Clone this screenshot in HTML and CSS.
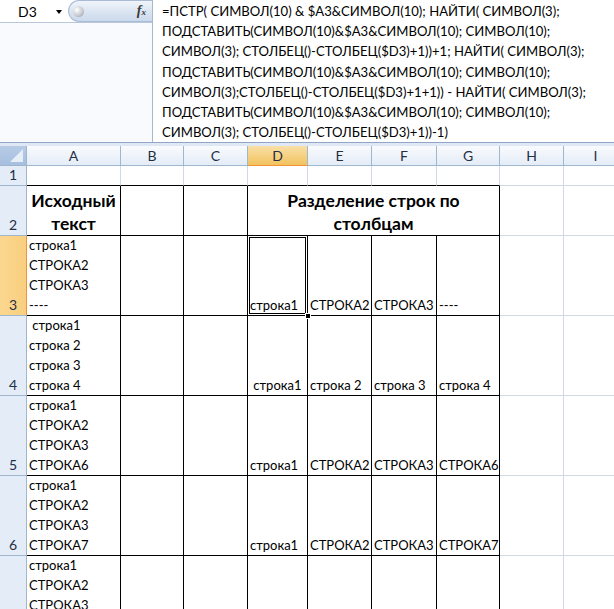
FILE: index.html
```html
<!DOCTYPE html>
<html lang="ru">
<head>
<meta charset="utf-8">
<title>Excel</title>
<link rel="stylesheet" href="styles.css">
</head>
<body>
<div class="app">
  <div class="fbar">
    <div class="fleft">
      <div class="ftop">
        <div class="namebox"><span class="nb-text">D3</span><span class="nb-arrow"></span></div>
        <div class="fxwidget"><span class="orb"></span><span class="fx">f<sub>x</sub></span></div>
      </div>
      <div class="fblank"></div>
    </div>
    <div class="ftext">=ПСТР( СИМВОЛ(10) &amp; $A3&amp;СИМВОЛ(10); НАЙТИ( СИМВОЛ(3);<br>ПОДСТАВИТЬ(СИМВОЛ(10)&amp;$A3&amp;СИМВОЛ(10); СИМВОЛ(10);<br>СИМВОЛ(3); СТОЛБЕЦ()-СТОЛБЕЦ($D3)+1))+1; НАЙТИ( СИМВОЛ(3);<br>ПОДСТАВИТЬ(СИМВОЛ(10)&amp;$A3&amp;СИМВОЛ(10); СИМВОЛ(10);<br>СИМВОЛ(3);СТОЛБЕЦ()-СТОЛБЕЦ($D3)+1+1)) - НАЙТИ( СИМВОЛ(3);<br>ПОДСТАВИТЬ(СИМВОЛ(10)&amp;$A3&amp;СИМВОЛ(10); СИМВОЛ(10);<br>СИМВОЛ(3); СТОЛБЕЦ()-СТОЛБЕЦ($D3)+1))-1)</div>
  </div>
  <div class="strip"></div>
  <div class="sheet">
    <div class="corner"><span class="corner-tri"></span></div>
    <div class="ch">A</div><div class="ch">B</div><div class="ch">C</div><div class="ch ch-sel">D</div><div class="ch">E</div><div class="ch">F</div><div class="ch">G</div><div class="ch">H</div><div class="ch">I</div>

    <div class="rh">1</div>
    <div class="c top"></div><div class="c top"></div><div class="c top"></div><div class="c top"></div><div class="c top"></div><div class="c top"></div><div class="c top"></div><div class="c"></div><div class="c"></div>

    <div class="rh">2</div>
    <div class="c t head"><span>Исходный<br>текст</span></div><div class="c t"></div><div class="c t"></div><div class="c t head span4"><span>Разделение строк по<br>столбцам</span></div><div class="c"></div><div class="c"></div>

    <div class="rh rh-sel">3</div>
    <div class="c t">строка1
СТРОКА2
СТРОКА3
----</div><div class="c t"></div><div class="c t"></div><div class="c t sel">строка1<span class="selbox"></span><span class="handle"></span></div><div class="c t">СТРОКА2</div><div class="c t">СТРОКА3</div><div class="c t">----</div><div class="c"></div><div class="c"></div>

    <div class="rh">4</div>
    <div class="c t"> строка1
строка 2
строка 3
строка 4</div><div class="c t"></div><div class="c t"></div><div class="c t"> строка1</div><div class="c t">строка 2</div><div class="c t">строка 3</div><div class="c t">строка 4</div><div class="c"></div><div class="c"></div>

    <div class="rh">5</div>
    <div class="c t">строка1
СТРОКА2
СТРОКА3
СТРОКА6</div><div class="c t"></div><div class="c t"></div><div class="c t">строка1</div><div class="c t">СТРОКА2</div><div class="c t">СТРОКА3</div><div class="c t">СТРОКА6</div><div class="c"></div><div class="c"></div>

    <div class="rh">6</div>
    <div class="c t">строка1
СТРОКА2
СТРОКА3
СТРОКА7</div><div class="c t"></div><div class="c t"></div><div class="c t">строка1</div><div class="c t">СТРОКА2</div><div class="c t">СТРОКА3</div><div class="c t">СТРОКА7</div><div class="c"></div><div class="c"></div>

    <div class="rh">7</div>
    <div class="c t">строка1
СТРОКА2
СТРОКА3
СТРОКА8</div><div class="c t"></div><div class="c t"></div><div class="c t"></div><div class="c t"></div><div class="c t"></div><div class="c t"></div><div class="c"></div><div class="c"></div>
  </div>
</div>
</body>
</html>
```
FILE: styles.css
```css
* { box-sizing: border-box; }
html, body { margin: 0; padding: 0; }
body {
  width: 614px;
  height: 609px;
  overflow: hidden;
  background: #fff;
  font-family: Lato, "Liberation Sans", sans-serif;
  font-size: 13.1px;
  color: #000;
}
.app { width: 614px; height: 609px; overflow: hidden; }

.fbar {
  display: flex;
  height: 143px;
  border-bottom: 1px solid #8fa6c4;
  background: #fff;
}
.fleft {
  width: 153px;
  display: flex;
  flex-direction: column;
  border-right: 1px solid #a7b7cc;
}
.ftop {
  height: 23px;
  display: flex;
  border-bottom: 1px solid #b9c7da;
}
.namebox {
  width: 68px;
  display: flex;
  align-items: center;
  background: #fff;
  padding-left: 18px;
  position: relative;
}
.nb-text { font-size: 14px; }
.nb-arrow {
  position: absolute;
  left: 56px;
  top: 10px;
  width: 0; height: 0;
  border-left: 3px solid transparent;
  border-right: 3px solid transparent;
  border-top: 4px solid #000;
}
.fxwidget {
  flex: 1;
  display: flex;
  align-items: center;
  justify-content: space-between;
  border-radius: 11px 0 0 11px;
  background: linear-gradient(#f1f5fb, #dbe5f2 50%, #cbd9ec);
  border: 1px solid #a9bbd5;
  border-right: none;
  padding: 0 6px 0 4px;
}
.orb {
  width: 11px; height: 11px;
  border-radius: 50%;
  background: radial-gradient(circle at 35% 35%, #fff, #c9ccd1 55%, #8d939c);
}
.fx {
  font-family: "Liberation Serif", serif;
  font-style: italic;
  font-weight: bold;
  font-size: 14px;
  color: #3a3a3a;
  line-height: 1;
}
.fx sub { font-size: 9px; vertical-align: baseline; }
.fblank { flex: 1; background: #f8fafd; }
.ftext {
  flex: 1;
  padding: 1px 0 0 9px;
  line-height: 20.2px;
  white-space: nowrap;
  overflow: hidden;
  background: #fff;
}

.strip { height: 3px; background: #dfe8f4; }

.sheet {
  display: grid;
  grid-template-columns: 27px 94px 63px 64px 60px 64px 65px 63px 64px 64px;
  grid-template-rows: 20px 20px 50px 80px 80px 80px 80px 80px;
  width: 628px;
  font-size: 13px;
}
.corner {
  background: linear-gradient(#b7cbe6, #a6bfe0);
  border-right: 1px solid #9eb6ce;
  border-bottom: 1px solid #9eb6ce;
  position: relative;
}
.corner-tri {
  position: absolute;
  right: 3px; bottom: 3px;
  width: 0; height: 0;
  border-left: 13px solid transparent;
  border-bottom: 13px solid #e8eef7;
}
.ch {
  background: linear-gradient(#f9fbfd, #e4ecf7);
  border-right: 1px solid #9eb6ce;
  border-bottom: 1px solid #9eb6ce;
  display: flex;
  align-items: center;
  justify-content: center;
  color: #1f2f44;
  font-size: 14px;
}
.ch-sel {
  background: linear-gradient(#f9e0a8, #f2c35e);
  border-bottom-color: #f29436;
}
.rh {
  background: #e4ecf7;
  border-right: 1px solid #9eb6ce;
  border-bottom: 1px solid #9eb6ce;
  display: flex;
  align-items: flex-end;
  justify-content: center;
  line-height: 20px;
  color: #1f2f44;
  font-size: 14px;
}
.rh-sel {
  background: linear-gradient(90deg, #fbd78f, #f9cf7f);
  border-right-color: #f29436;
}
.c {
  border-right: 1px solid #d0d7e5;
  border-bottom: 1px solid #d0d7e5;
  display: flex;
  flex-direction: column;
  justify-content: flex-end;
  padding: 0 0 0 2px;
  line-height: 20px;
  white-space: pre;
  overflow: hidden;
  position: relative;
}
.c.top { border-bottom-color: #000; }
.c.t { border-right-color: #000; border-bottom-color: #000; }
.head {
  font-weight: bold;
  font-size: 17.5px;
  line-height: 23px;
  text-align: center;
  align-items: center;
  white-space: normal;
  padding: 0;
}
.span4 { grid-column: span 4; }
.sel { overflow: visible; }
.selbox {
  position: absolute;
  left: -1px; top: -1px; right: -1px; bottom: -1px;
  border: 1px solid #000;
  box-shadow: inset 0 0 0 1px #fff, inset 0 0 0 2px #000;
  pointer-events: none;
}
.handle {
  position: absolute;
  right: -4px; bottom: -4px;
  width: 6px; height: 6px;
  background: #000;
  border: 1px solid #fff;
  z-index: 2;
}
```
